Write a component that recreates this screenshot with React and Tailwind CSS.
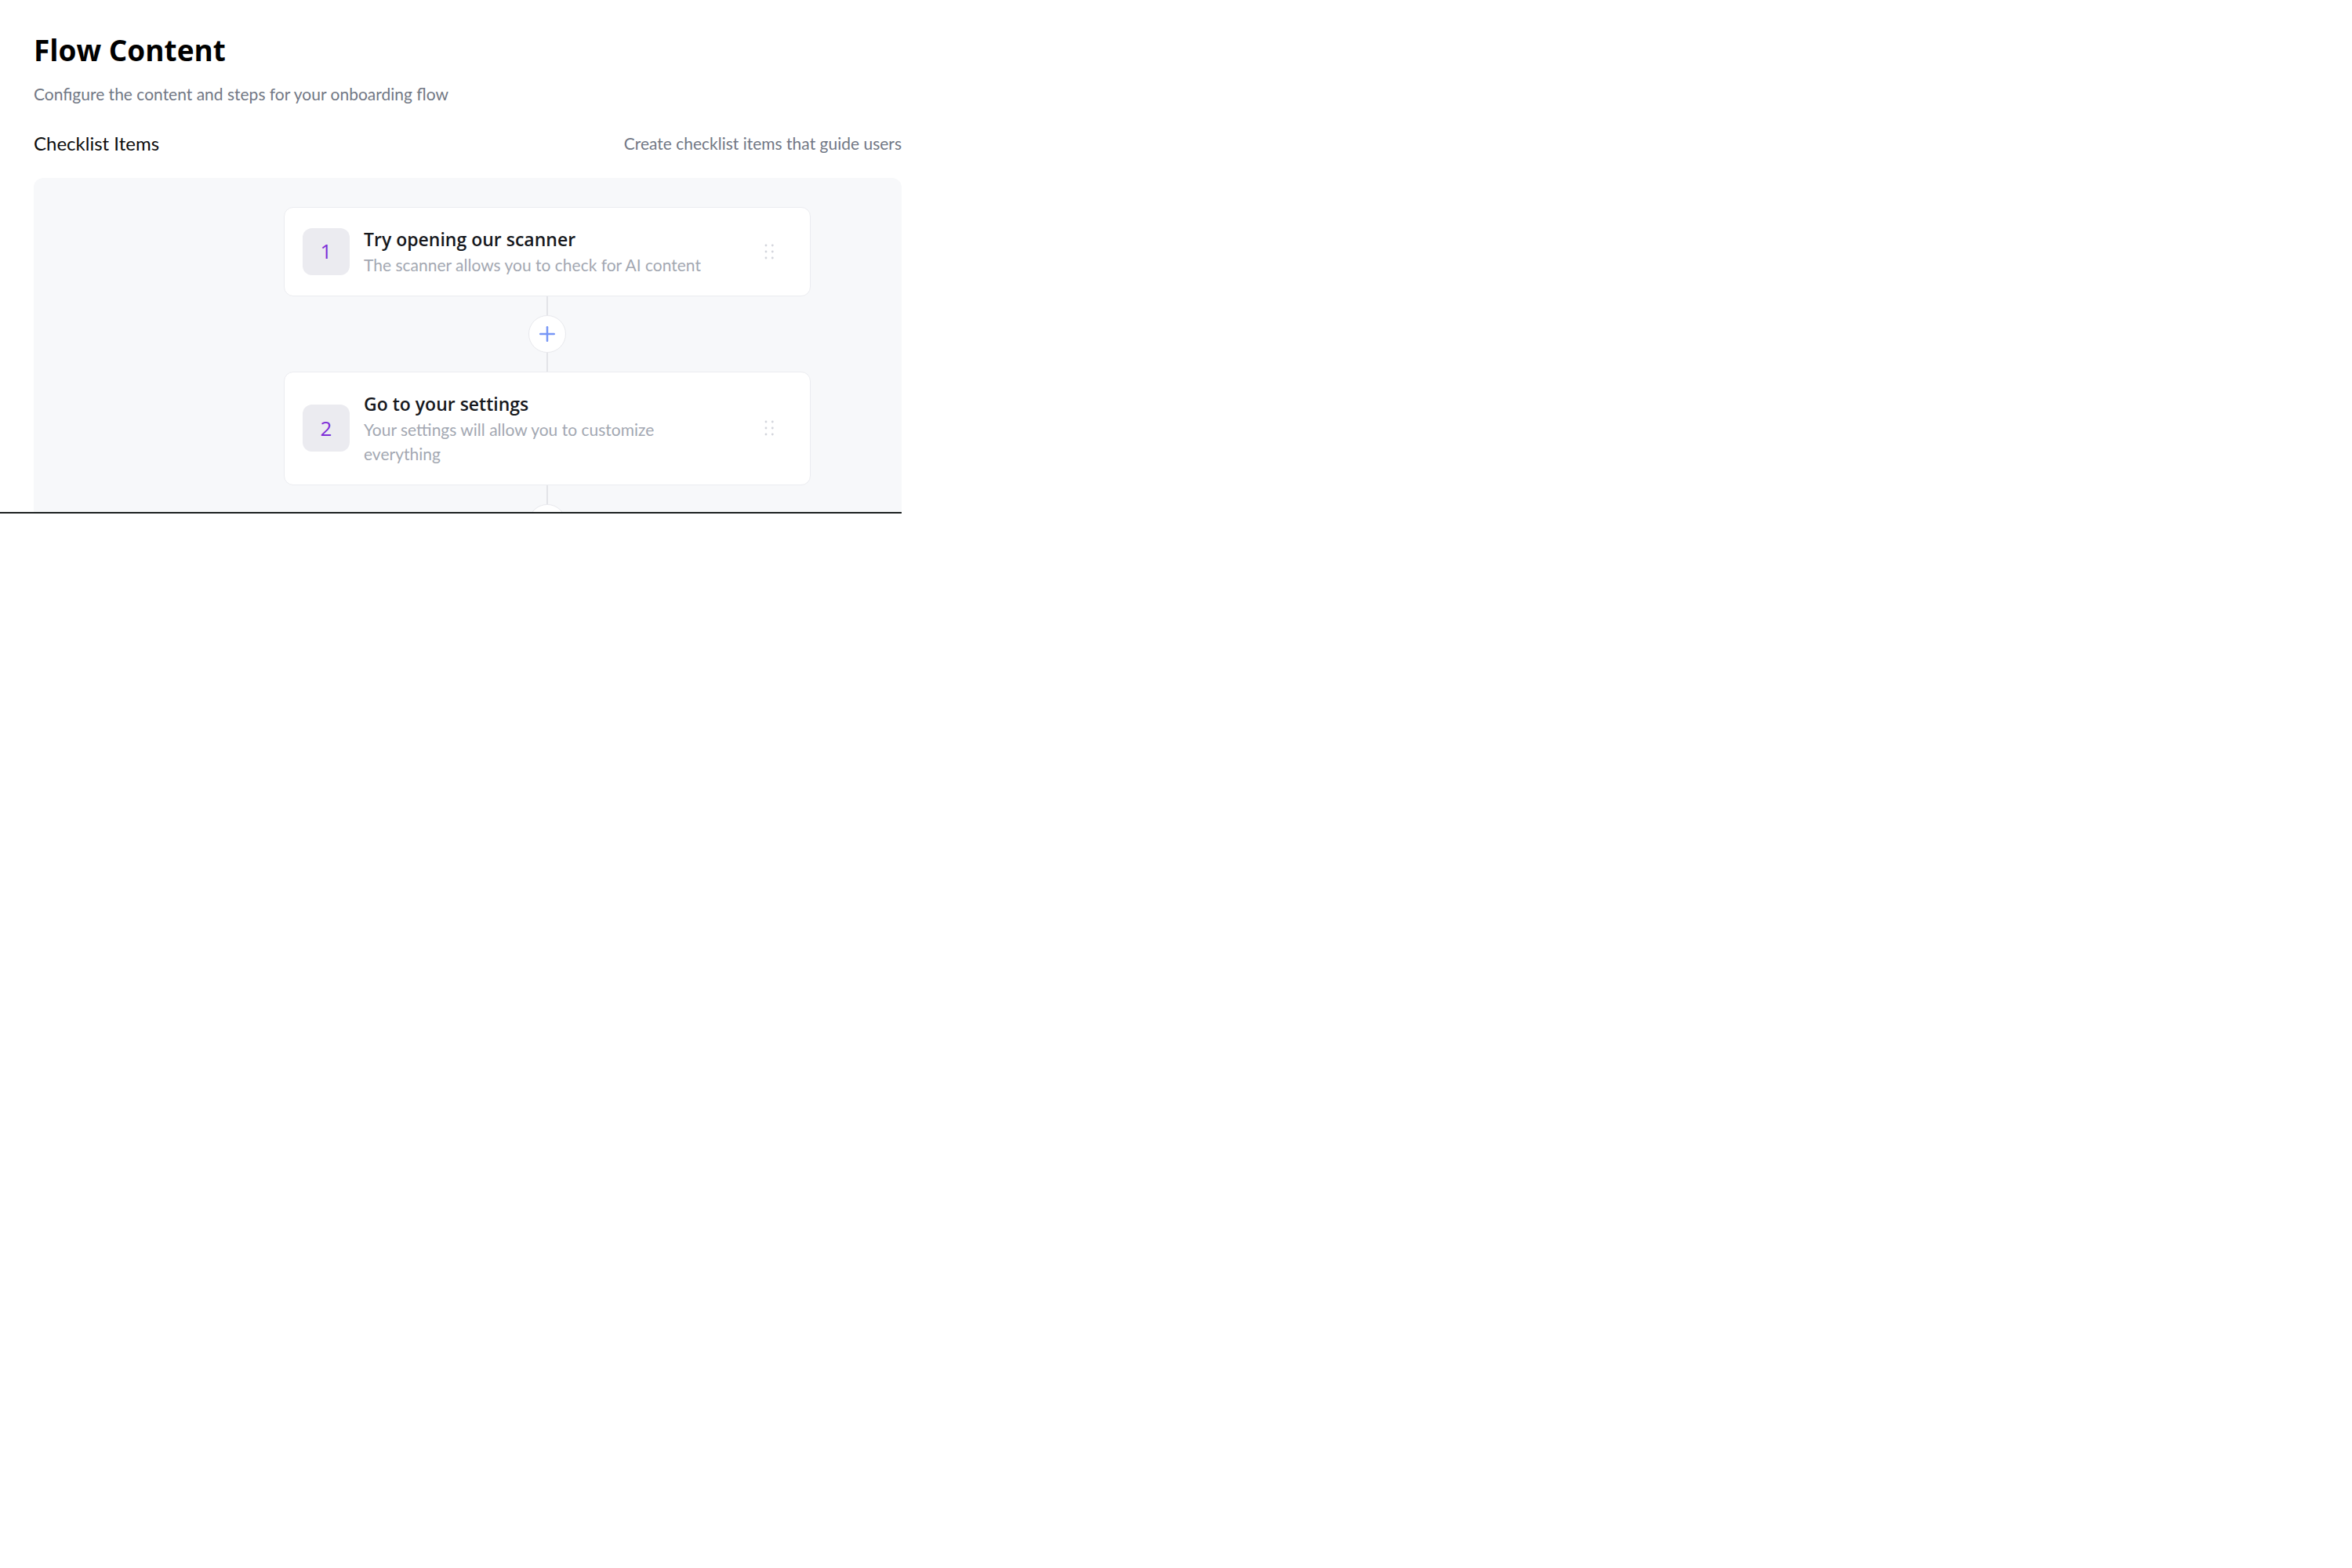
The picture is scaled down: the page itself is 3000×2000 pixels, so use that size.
import React from "react";
import { Plus } from "lucide-react";

const items = [
  { n: 1, title: "Try opening our scanner", desc: "The scanner allows you to check for AI content" },
  { n: 2, title: "Go to your settings", desc: "Your settings will allow you to customize everything" },
];

function Grip() {
  return (
    <svg width="14" height="20" viewBox="0 0 14 20" className="ml-auto shrink-0">
      {[2, 10, 18].map((y) => (
        <g key={y}>
          <circle cx="3" cy={y} r="1.4" fill="#d3d5dc" />
          <circle cx="11.3" cy={y} r="1.4" fill="#d3d5dc" />
        </g>
      ))}
    </svg>
  );
}

function Card({ n, title, desc }) {
  return (
    <div className="w-[672px] flex items-center bg-white border border-[#ebecf0] rounded-[12px] pl-[23px] pr-[45px] py-[24px]">
      <div
        className="w-[60px] h-[60px] shrink-0 rounded-[12px] bg-[#ebebf0] flex items-center justify-center text-[26px] font-medium text-[#7e2ed8]"
        style={{ fontFamily: '"Open Sans", sans-serif' }}
      >
        {n}
      </div>
      <div className="ml-[18px] flex-1 max-w-[450px] flex flex-col">
        <div
          className="text-[23px] leading-[33px] font-semibold text-[#16181d]"
          style={{ fontFamily: '"Open Sans", sans-serif' }}
        >
          {title}
        </div>
        <div className="text-[21px] leading-[31px] text-[#a3a8b2]">{desc}</div>
      </div>
      <Grip />
    </div>
  );
}

function Connector({ last }) {
  return (
    <div className="flex flex-col items-center">
      <div className="w-[1.5px] h-[24px] bg-[#e3e4e8]" />
      <div className="w-[48px] h-[48px] rounded-full bg-white border border-[#e8e9ed] flex items-center justify-center">
        <Plus size={30} strokeWidth={2} color="#7796f6" />
      </div>
      {!last && <div className="w-[1.5px] h-[24px] bg-[#e3e4e8]" />}
    </div>
  );
}

export default function App() {
  return (
    <div className="bg-white min-h-screen" style={{ fontFamily: 'Lato, "Liberation Sans", sans-serif' }}>
      <div className="w-[1150px] h-[655px] overflow-hidden border-b-2 border-[#1c2121]">
        <div className="pl-[43px] pt-[42px] flex flex-col">
          <h1
            className="text-[37px] leading-[44px] font-bold text-black"
            style={{ fontFamily: '"Open Sans", sans-serif' }}
          >
            Flow Content
          </h1>
          <p className="mt-[18px] text-[21px] leading-[31.5px] text-[#727885]">
            Configure the content and steps for your onboarding flow
          </p>
          <div className="mt-[29px] h-[36px] flex items-center justify-between">
            <span className="text-[24px] leading-[36px] text-[#0d0d0d]">Checklist Items</span>
            <span className="text-[21px] leading-[31.5px] text-[#727885]">Create checklist items that guide users</span>
          </div>
          <div className="mt-[26px] bg-[#f7f8fa] rounded-t-[12px] pt-[37px] pl-[319px] flex flex-col items-start">
            <div className="flex flex-col items-center">
              {items.map((it, i) => (
                <React.Fragment key={it.n}>
                  <Card {...it} />
                  <Connector last={i === items.length - 1} />
                </React.Fragment>
              ))}
              <div className="w-[1.5px] h-[24px] bg-[#e3e4e8]" />
            </div>
          </div>
        </div>
      </div>
    </div>
  );
}
